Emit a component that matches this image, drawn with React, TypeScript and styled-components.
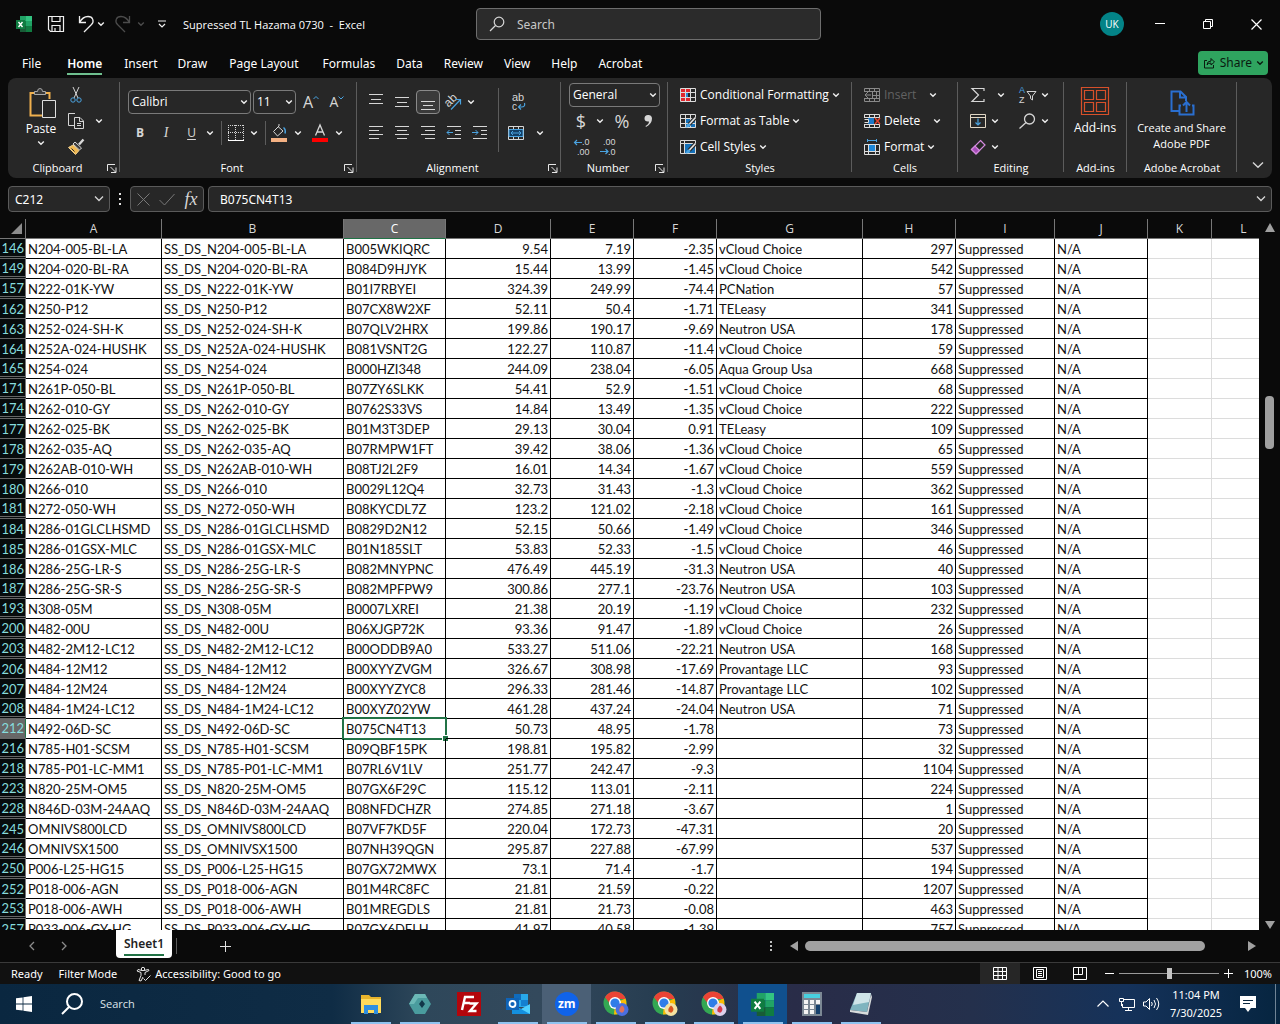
import React from "react";
import styled, { createGlobalStyle, css } from "styled-components";

const ui = `"Open Sans", "Noto Sans", sans-serif`;
const uiWide = `"Noto Sans", "Open Sans", sans-serif`;
const sheet = `Lato, "Open Sans", sans-serif`;
const mini = `"Liberation Sans", sans-serif`;
const blue = "#4aa3e0";
const fg = "#d6d6d6";

const Global = createGlobalStyle`
  *, *::before, *::after { box-sizing: border-box; }
  body { margin: 0; background: #0a0a0a; font: 12px/16px ${ui}; color: #fff; }
  button, input, select { font: inherit; color: inherit; margin: 0; padding: 0; border: 0; background: none; outline: 0; }
  svg { display: block; flex: none; overflow: visible; }
`;

const Window = styled.div`
  display: flex;
  flex-direction: column;
  height: 100vh;
  overflow: hidden;
`;

const row = css`
  display: flex;
  align-items: center;
`;

/* ---------- title bar ---------- */
const TitleBar = styled.header`
  display: grid;
  grid-template-columns: 476px minmax(0, 345px) 1fr;
  height: 48px;
  align-items: center;
`;
const QuickAccess = styled.div`
  ${row}
  padding-left: 16px;
`;
const Title = styled.h1`
  margin: 0 0 0 5px;
  padding-top: 1px;
  font-size: 11px;
  font-weight: 400;
  white-space: pre;
`;
const SearchBox = styled.label`
  ${row}
  height: 32px;
  padding: 0 12px;
  gap: 12px;
  border: 1px solid #6e6e6e;
  border-radius: 4px;
  background: #2b2b2b;
  font-family: ${uiWide};
  input {
    flex: 1;
    min-width: 0;
    padding-top: 1px;
  }
  input::placeholder {
    color: #c8c8c8;
    opacity: 1;
  }
`;
const WindowControls = styled.div`
  ${row}
  justify-content: flex-end;
`;
const Avatar = styled.button`
  width: 24px;
  height: 24px;
  margin-right: 12px;
  border-radius: 50%;
  background: #038387;
  font-size: 10px;
`;
const IconButton = styled.button<{ $w?: number; $h?: number; $boxed?: boolean }>`
  display: flex;
  flex: none;
  align-items: center;
  justify-content: center;
  width: ${(p) => p.$w ?? 24}px;
  height: ${(p) => p.$h ?? 24}px;
  ${(p) => p.$boxed && "margin: 0 1px; border: 1px solid #8a8a8a; border-radius: 4px; background: #3a3a3a;"}
`;

/* ---------- ribbon tabs ---------- */
const TabBar = styled.nav`
  ${row}
  height: 30px;
  padding: 0 12px 0 12px;
`;
const Tab = styled.button<{ $active?: boolean; $gap?: number }>`
  height: 26px;
  padding: 0 10px;
  margin-right: ${(p) => p.$gap ?? 0}px;
  font-family: ${uiWide};
  font-weight: ${(p) => (p.$active ? 600 : 400)};
  span {
    display: block;
    padding: 4px 0 1px;
    border-bottom: 2px solid ${(p) => (p.$active ? "#6fc08f" : "transparent")};
  }
`;
const Share = styled.button`
  ${row}
  margin-left: auto;
  height: 24px;
  padding: 0 5px;
  gap: 5px;
  border-radius: 4px;
  background: #2fa45f;
  color: #0a1a10;
  font-family: ${uiWide};
`;

/* ---------- ribbon ---------- */
const Ribbon = styled.section`
  display: flex;
  height: 100px;
  margin: 0 8px;
  padding-top: 4px;
  border-radius: 8px;
  background: #272727;
`;
const Group = styled.div<{ $w: number }>`
  display: flex;
  flex: none;
  flex-direction: column;
  width: ${(p) => p.$w}px;
  height: 94px;
  background: linear-gradient(#5c5c5c, #5c5c5c) right top / 1px 90px no-repeat;
`;
const GroupBody = styled.div<{ $pad?: number }>`
  display: flex;
  height: 78px;
  padding-left: ${(p) => p.$pad ?? 0}px;
`;
const GroupLabel = styled.div`
  display: flex;
  height: 16px;
  font-size: 11px;
  span {
    flex: 1;
    text-align: center;
    white-space: nowrap;
  }
  svg {
    margin-right: 3px;
  }
`;
const Stack = styled.div<{ $pad?: number }>`
  display: flex;
  flex-direction: column;
  padding-top: ${(p) => p.$pad ?? 0}px;
`;
const Line = styled.div<{ $h?: number }>`
  ${row}
  height: ${(p) => p.$h ?? 26}px;
`;
const BigButton = styled.button<{ $w: number; $small?: boolean }>`
  display: flex;
  flex-direction: column;
  align-items: center;
  width: ${(p) => p.$w}px;
  padding-top: 4px;
  font-size: ${(p) => (p.$small ? 11 : 12)}px;
  svg + span {
    margin-top: 2px;
  }
`;
const TextButton = styled.button<{ $dim?: boolean; $w?: number }>`
  ${row}
  gap: 4px;
  height: 24px;
  ${(p) => p.$w && `width: ${p.$w}px;`}
  color: ${(p) => (p.$dim ? "#626262" : "#fff")};
  white-space: nowrap;
`;
const Divider = styled.i<{ $w: number; $h: number }>`
  flex: none;
  width: ${(p) => p.$w}px;
  height: ${(p) => p.$h}px;
  background: linear-gradient(#5c5c5c, #5c5c5c) center / 1px 100% no-repeat;
`;
const SelectWrap = styled.span<{ $w: number }>`
  display: grid;
  align-items: center;
  width: ${(p) => p.$w}px;
  margin-right: 2px;
  select {
    grid-area: 1 / 1;
    height: 24px;
    padding-left: 3px;
    appearance: none;
    border: 1px solid #7a7a7a;
    border-radius: 4px;
    background: #272727;
  }
  svg {
    grid-area: 1 / 1;
    justify-self: end;
    margin-right: 4px;
    pointer-events: none;
  }
`;
const Glyph = styled.span<{ $size: number; $serif?: boolean; $italic?: boolean; $bold?: boolean; $under?: boolean }>`
  font-size: ${(p) => p.$size}px;
  line-height: 20px;
  color: ${fg};
  font-family: ${(p) => (p.$serif ? `"Liberation Serif", serif` : ui)};
  font-style: ${(p) => (p.$italic ? "italic" : "normal")};
  font-weight: ${(p) => (p.$bold ? 700 : 400)};
  text-decoration: ${(p) => (p.$under ? "underline" : "none")};
  text-underline-offset: 2px;
`;
const Collapse = styled.button`
  display: flex;
  margin: auto 8px 9px auto;
`;

/* ---------- formula bar ---------- */
const FormulaBar = styled.section`
  ${row}
  padding: 8px 8px 7px;
  font-family: ${uiWide};
`;
const Field = styled.div<{ $w?: number; $pad?: number }>`
  ${row}
  ${(p) => (p.$w ? `flex: none; width: ${p.$w}px;` : "flex: 1; min-width: 0; margin-left: 4px;")}
  height: 26px;
  padding: 0 2px 0 ${(p) => p.$pad ?? 0}px;
  border: 1px solid #5a5a5a;
  border-radius: 4px;
  background: #272727;
  input {
    flex: 1;
    min-width: 0;
    padding-top: 1px;
  }
`;

/* ---------- grid ---------- */
const SheetArea = styled.main`
  display: flex;
  flex: 1;
  min-height: 0;
`;
const GridView = styled.div`
  flex: 1;
  min-width: 0;
  overflow: hidden;
  background: #fff;
`;
const Grid = styled.table`
  width: max(100%, 1276px);
  table-layout: fixed;
  border-collapse: separate;
  border-spacing: 0;
  font: 13px/17px ${sheet};
  color: #111;
`;
const ColHead = styled.th<{ $active?: boolean }>`
  height: 20px;
  padding: 0;
  font: 12px/19px ${ui};
  color: ${(p) => (p.$active ? "#fff" : "#d8d8d8")};
  background: ${(p) => (p.$active ? "#686868" : "#0a0a0a")};
  border-right: 1px solid #777;
  border-bottom: 1px solid ${(p) => (p.$active ? "#217346" : "#777")};
`;
const Corner = styled(ColHead)`
  svg {
    margin-left: auto;
    margin-right: 3px;
  }
`;
const RowHead = styled.th<{ $active?: boolean; $skip?: boolean }>`
  height: 20px;
  padding: ${(p) => (p.$skip ? 1 : 2)}px 1px 0 0;
  text-align: right;
  font-weight: 400;
  line-height: ${(p) => (p.$skip ? 16 : 17)}px;
  color: #86dcdc;
  background: ${(p) => (p.$active ? "#686868" : "#070b0c")};
  border-right: 1px solid ${(p) => (p.$active ? "#217346" : "#777")};
  border-bottom: ${(p) => (p.$skip ? "3px double #666" : "1px solid #666")};
`;
const Cell = styled.td<{ $num?: boolean; $blank?: boolean; $active?: boolean }>`
  position: relative;
  height: 20px;
  padding: 2px 2px 0;
  white-space: nowrap;
  text-align: ${(p) => (p.$num ? "right" : "left")};
  border-right: 1px solid ${(p) => (p.$blank ? "#dcdcdc" : "#000")};
  border-bottom: 1px solid ${(p) => (p.$blank ? "#dcdcdc" : "#000")};
  ${(p) =>
    p.$active &&
    css`
      &::before {
        content: "";
        position: absolute;
        inset: -2px;
        border: 2px solid #217346;
      }
      &::after {
        content: "";
        position: absolute;
        right: -3px;
        bottom: -3px;
        width: 6px;
        height: 6px;
        border: 1px solid #fff;
        border-right: 0;
        border-bottom: 0;
        background: #217346;
      }
    `}
`;
const VScroll = styled.div`
  display: flex;
  flex-direction: column;
  align-items: center;
  width: 21px;
  padding: 4px 0 0;
`;
const VTrack = styled.div`
  display: grid;
  flex: 1;
  width: 9px;
  grid-template-rows: 164fr 53fr 471fr;
  &::before {
    content: "";
    grid-row: 2;
    border-radius: 4px;
    background: #a0a0a0;
  }
`;

/* ---------- sheet tabs ---------- */
const SheetBar = styled.nav`
  display: grid;
  grid-template-columns: 1fr 521px;
  height: 32px;
  align-items: center;
`;
const SheetTabs = styled.div`
  ${row}
  height: 32px;
  padding-left: 16px;
`;
const SheetTab = styled.button`
  align-self: flex-start;
  height: 28px;
  margin: 0 0 0 36px;
  padding: 0 8px;
  border-radius: 0 0 4px 4px;
  background: #fff;
  color: #222;
  font-family: ${uiWide};
  font-weight: 600;
  span {
    display: block;
    padding-top: 2px;
    border-bottom: 2px solid #217346;
    line-height: 20px;
  }
`;
const HScroll = styled.div`
  ${row}
  padding-right: 24px;
  gap: 6px;
`;
const HTrack = styled.div`
  display: grid;
  flex: 1;
  height: 10px;
  grid-template-columns: 400fr 35fr;
  &::before {
    content: "";
    border-radius: 5px;
    background: #a0a0a0;
  }
`;

/* ---------- status bar ---------- */
const StatusBar = styled.footer`
  ${row}
  height: 22px;
  padding: 0 8px 0 11px;
  border-top: 1px solid #3a3a3a;
  background: #111;
  font: 11px/16px ${uiWide};
`;
const StatusText = styled.span<{ $gap?: number }>`
  margin-right: ${(p) => p.$gap ?? 0}px;
`;
const ViewSwitch = styled.div`
  display: flex;
  margin-left: auto;
`;
const ViewButton = styled.button<{ $active?: boolean }>`
  display: flex;
  align-items: center;
  justify-content: center;
  width: 40px;
  height: 21px;
  background: ${(p) => (p.$active ? "#262626" : "transparent")};
`;
const Zoom = styled.input`
  width: 100px;
  height: 16px;
  appearance: none;
  background: linear-gradient(#9a9a9a, #9a9a9a) center / 100% 1px no-repeat;
  &::-webkit-slider-thumb {
    appearance: none;
    width: 5px;
    height: 11px;
    background: #c4c4c4;
  }
`;
const ZoomValue = styled.output`
  width: 35px;
  text-align: right;
`;

/* ---------- task bar ---------- */
const TaskBar = styled.footer`
  ${row}
  height: 40px;
  background: linear-gradient(90deg, #0a2740 0, #0f2c45 26%, #2e475a 33%, #33495c 42%, #263c50 52%, #292c48 62%, #24304c 76%, #15325a 88%, #062540 100%);
`;
const TaskSearch = styled.button`
  ${row}
  width: 298px;
  height: 40px;
  gap: 16px;
  padding-left: 12px;
  font-size: 11px;
  color: #dde4ea;
`;
const TaskItem = styled.button<{ $bg?: string; $idle?: boolean }>`
  display: flex;
  align-items: center;
  justify-content: center;
  width: 49px;
  height: 40px;
  background: ${(p) => (p.$idle ? "none" : "linear-gradient(#8fc3f0, #8fc3f0) center bottom / 40px 2px no-repeat")}
    ${(p) => (p.$bg ? `, linear-gradient(${p.$bg}, ${p.$bg})` : "")};
`;
const Tray = styled.div`
  ${row}
  margin-left: auto;
  padding-right: 4px;
`;
const Clock = styled.time`
  width: 66px;
  text-align: center;
  font: 11px/18px ${uiWide};
`;
const ShowDesktop = styled.i`
  width: 1px;
  height: 40px;
  margin-left: 8px;
  background: #6f8496;
`;

/* ---------- icons ---------- */
type SvgProps = { w?: number; h?: number; s?: string; sw?: number; children: React.ReactNode };
const Svg = ({ w = 16, h = 16, s = fg, sw = 1, children }: SvgProps) => (
  <svg width={w} height={h} viewBox={`0 0 ${w} ${h}`} fill="none" stroke={s} strokeWidth={sw} aria-hidden="true">
    {children}
  </svg>
);
const Chev = ({ c = "#f0f0f0" }: { c?: string }) => (
  <Svg w={6} h={6} s={c} sw={1.4}>
    <path d="M.200 1.500 3 4.200 5.800 1.500" />
  </Svg>
);
const BigChev = () => (
  <Svg w={12} h={8} sw={1.4}>
    <path d="M1 1.500 6 6.300l5-4.800" />
  </Svg>
);
const Launcher = () => (
  <Svg w={10} h={16} s="#e6e6e6">
    <path d="M.500 11V4.500H8M3.500 7l5 5M9 7.500v5H4" />
  </Svg>
);
const ExcelLogo = ({ size = 16 }: { size?: number }) => (
  <svg width={size} height={size} viewBox="0 0 16 16" aria-hidden="true">
    <path d="M4 0h6v5H4z" fill="#21a366" />
    <path d="M10 0h6v5h-6z" fill="#33c481" />
    <path d="M4 5h6v5H4z" fill="#107c41" />
    <path d="M10 5h6v5h-6z" fill="#21a366" />
    <path d="M4 10h12v6H4z" fill="#185c37" />
    <path d="M10 10h6v6h-6z" fill="#107c41" />
    <path d="M0 4h9v9H0z" fill="#107c41" />
    <path d="m2.500 6 4 5M6.500 6l-4 5" stroke="#fff" strokeWidth="1.400" />
  </svg>
);
const Chrome = ({ badge, inner }: { badge: string; inner: string }) => (
  <svg width="26" height="26" viewBox="0 0 26 26" aria-hidden="true">
    <circle cx="12" cy="12" r="11.500" fill="#34a853" />
    <path d="M12 12 22.500 7.500A11.500 11.500 0 0 1 11 23.500Z" fill="#fbbc04" />
    <path d="M2 6.300A11.500 11.500 0 0 1 22.800 8H12L8 14Z" fill="#ea4335" />
    <circle cx="12" cy="12" r="6" fill="#fff" />
    <circle cx="12" cy="12" r="4.600" fill="#2f7de8" />
    <circle cx="19" cy="18.500" r="6.500" fill={badge} />
    <path d="M19 14.500q3.500 2.500 2 5.500t-4.500.5q-1-3 2.500-6" fill={inner} />
  </svg>
);
const Bars = ({ l }: { l: number[][] }) => (
  <Svg w={16} h={18}>
    {l.map(([x1, x2, y]) => (
      <path key={y} d={`M${x1} ${y}.500H${x2}`} />
    ))}
  </Svg>
);
const TableIcon = ({ kind }: { kind: "cf" | "table" | "cell" | "insert" | "delete" | "format" }) => {
  const c = kind === "insert" ? "#8a8a8a" : "#dcdcdc";
  return (
    <Svg s={c}>
      {kind === "cf" && <path d="M1 1h9v4H1zM1 5h4v5H1zM1 10h9v5H1z" fill="#e0282e" stroke="none" />}
      {kind === "cf" && <path d="M6 5h2v5H6z" fill="#2b88d8" stroke="none" />}
      {kind === "table" && <path d="M5 5h10v10H5z" fill="#1470b8" stroke="none" />}
      {kind === "cell" && <path d="M4 4h11v11H4z" fill="#1470b8" stroke="none" />}
      {kind === "format" && <path d="M4 6h8v6H4z" fill="#1c86d8" stroke="none" />}
      {kind === "delete" && <path d="M4 4h6v7H4z" fill="#1c78c8" stroke="none" />}
      {(kind === "cf" || kind === "table") && <path d="M.500 1.500h15v13H.500zM.500 5.500h15M.500 10.500h15M5.500 1v14M10.500 1v14" />}
      {kind === "cell" && <path d="M.500 1.500h15v13H.500zM4.500 1v14M.500 4.500h15" />}
      {(kind === "insert" || kind === "delete") && (
        <path d="M.500 5V1.500h15V5M.500 11v3.500h15V11M5.500 1.500v3M10.500 1.500v3M5.500 11v3.500M10.500 11v3.500M.500 4.500h15M.500 11.500h15" />
      )}
      {kind === "insert" && <path d="M8.500 4.500v7M12.500 4.500v7M8 8.500h8M15.500 4v8M7 8H1m3-3L1 8l3 3" />}
      {kind === "delete" && <path d="M.500 6.500h4v3h-4" />}
      {kind === "delete" && <path d="m11 5 5 6M16 5l-5 6" stroke="#e8432e" strokeWidth="1.400" />}
      {kind === "format" && <path d="M.500 5.500h15v10H.500zM.500 12.500h15M4.500 5v10M11.500 5v10" />}
      {kind === "format" && <path d="M4 1.500h8M3.500 0v3M12.500 0v3" stroke={blue} />}
      {(kind === "table" || kind === "cell") && (
        <>
          <path d="M15.500 4.500 9 11.500" stroke="#272727" strokeWidth="4" />
          <path d="M15.500 4.500 8.500 12" stroke="#e6e6e6" strokeWidth="1.600" />
          <path d="M9.500 10.500q-3 0-4 4 3.500.5 5-2.500Z" fill={blue} stroke="none" />
        </>
      )}
    </Svg>
  );
};

/* ---------- data ---------- */
const V = "vCloud Choice";
const N = "Neutron USA";
type Item = [number, string, string, string, string, string, string, string];
const items: Item[] = [
  [146, "N204-005-BL-LA", "B005WKIQRC", "9.54", "7.19", "-2.35", V, "297"],
  [149, "N204-020-BL-RA", "B084D9HJYK", "15.44", "13.99", "-1.45", V, "542"],
  [157, "N222-01K-YW", "B01I7RBYEI", "324.39", "249.99", "-74.4", "PCNation", "57"],
  [162, "N250-P12", "B07CX8W2XF", "52.11", "50.4", "-1.71", "TELeasy", "341"],
  [163, "N252-024-SH-K", "B07QLV2HRX", "199.86", "190.17", "-9.69", N, "178"],
  [164, "N252A-024-HUSHK", "B081VSNT2G", "122.27", "110.87", "-11.4", V, "59"],
  [165, "N254-024", "B000HZI348", "244.09", "238.04", "-6.05", "Aqua Group Usa", "668"],
  [171, "N261P-050-BL", "B07ZY6SLKK", "54.41", "52.9", "-1.51", V, "68"],
  [174, "N262-010-GY", "B0762S33VS", "14.84", "13.49", "-1.35", V, "222"],
  [177, "N262-025-BK", "B01M3T3DEP", "29.13", "30.04", "0.91", "TELeasy", "109"],
  [178, "N262-035-AQ", "B07RMPW1FT", "39.42", "38.06", "-1.36", V, "65"],
  [179, "N262AB-010-WH", "B08TJ2L2F9", "16.01", "14.34", "-1.67", V, "559"],
  [180, "N266-010", "B0029L12Q4", "32.73", "31.43", "-1.3", V, "362"],
  [181, "N272-050-WH", "B08KYCDL7Z", "123.2", "121.02", "-2.18", V, "161"],
  [184, "N286-01GLCLHSMD", "B0829D2N12", "52.15", "50.66", "-1.49", V, "346"],
  [185, "N286-01GSX-MLC", "B01N185SLT", "53.83", "52.33", "-1.5", V, "46"],
  [186, "N286-25G-LR-S", "B082MNYPNC", "476.49", "445.19", "-31.3", N, "40"],
  [187, "N286-25G-SR-S", "B082MPFPW9", "300.86", "277.1", "-23.76", N, "103"],
  [193, "N308-05M", "B0007LXREI", "21.38", "20.19", "-1.19", V, "232"],
  [200, "N482-00U", "B06XJGP72K", "93.36", "91.47", "-1.89", V, "26"],
  [203, "N482-2M12-LC12", "B00ODDB9A0", "533.27", "511.06", "-22.21", N, "168"],
  [206, "N484-12M12", "B00XYYZVGM", "326.67", "308.98", "-17.69", "Provantage LLC", "93"],
  [207, "N484-12M24", "B00XYYZYC8", "296.33", "281.46", "-14.87", "Provantage LLC", "102"],
  [208, "N484-1M24-LC12", "B00XYZ02YW", "461.28", "437.24", "-24.04", N, "71"],
  [212, "N492-06D-SC", "B075CN4T13", "50.73", "48.95", "-1.78", "", "73"],
  [216, "N785-H01-SCSM", "B09QBF15PK", "198.81", "195.82", "-2.99", "", "32"],
  [218, "N785-P01-LC-MM1", "B07RL6V1LV", "251.77", "242.47", "-9.3", "", "1104"],
  [223, "N820-25M-OM5", "B07GX6F29C", "115.12", "113.01", "-2.11", "", "224"],
  [228, "N846D-03M-24AAQ", "B08NFDCHZR", "274.85", "271.18", "-3.67", "", "1"],
  [245, "OMNIVS800LCD", "B07VF7KD5F", "220.04", "172.73", "-47.31", "", "20"],
  [246, "OMNIVSX1500", "B07NH39QGN", "295.87", "227.88", "-67.99", "", "537"],
  [250, "P006-L25-HG15", "B07GX72MWX", "73.1", "71.4", "-1.7", "", "194"],
  [252, "P018-006-AGN", "B01M4RC8FC", "21.81", "21.59", "-0.22", "", "1207"],
  [253, "P018-006-AWH", "B01MREGDLS", "21.81", "21.73", "-0.08", "", "463"],
  [257, "P033-006-GY-HG", "B07GX6DFLH", "41.97", "40.58", "-1.39", "", "757"],
];
const colWidths = [26, 136, 182, 102, 105, 83, 83, 146, 93, 99, 93, 64];
const letters = "ABCDEFGHIJKL".split("");
const tabs: [string, number][] = [
  ["File", 6], ["Home", 2], ["Insert", 0], ["Draw", 2], ["Page Layout", 4], ["Formulas", 1],
  ["Data", 1], ["Review", 1], ["View", 1], ["Help", 1], ["Acrobat", 0],
];

const ChevButton = ({ w = 14, label }: { w?: number; label: string }) => (
  <IconButton $w={w} aria-label={label}>
    <Chev />
  </IconButton>
);
const Pick = ({ w, value, label }: { w: number; value: string; label: string }) => (
  <SelectWrap $w={w}>
    <select aria-label={label} defaultValue={value}>
      <option>{value}</option>
    </select>
    <Chev />
  </SelectWrap>
);

function TopBar() {
  return (
    <TitleBar>
      <QuickAccess>
        <ExcelLogo />
        <IconButton $w={48} aria-label="Save">
          <Svg w={18} h={18} s="#f0f0f0" sw={1.2}>
            <path d="M1.500 1.500h15v15h-13l-2-2zM5 1.500v5h8v-5M5 16.500v-6h8v6M8 16v-3" />
          </Svg>
        </IconButton>
        <IconButton $w={12} aria-label="Undo">
          <Svg w={16} h={18} s="#f0f0f0" sw={1.3}>
            <path d="M1.500 1v6.500H8M1.500 7.500C4 3 7 1.500 10 1.500c5 0 6.500 5 3.500 8L6 17" />
          </Svg>
        </IconButton>
        <ChevButton w={18} label="Undo list" />
        <IconButton $w={26} aria-label="Redo">
          <Svg w={16} h={18} s="#4c4c4c" sw={1.3}>
            <path d="M14.500 1v6.500H8M14.500 7.500C12 3 9 1.500 6 1.500c-5 0-6.500 5-3.500 8L10 17" />
          </Svg>
        </IconButton>
        <IconButton $w={10} aria-label="Redo list">
          <Chev c="#4c4c4c" />
        </IconButton>
        <IconButton $w={32} aria-label="Customize toolbar">
          <Svg w={10} h={8} s="#f0f0f0" sw={1.2}>
            <path d="M1 1h8M2 4l3 3 3-3" />
          </Svg>
        </IconButton>
        <Title>{"Supressed TL Hazama 0730  -  Excel"}</Title>
      </QuickAccess>
      <SearchBox>
        <Svg w={16} h={16} sw={1.2}>
          <circle cx="10" cy="6" r="4.800" />
          <path d="M6.500 9.500 1 15" />
        </Svg>
        <input placeholder="Search" aria-label="Search" />
      </SearchBox>
      <WindowControls>
        <Avatar>UK</Avatar>
        <IconButton $w={48} aria-label="Minimize">
          <Svg w={10} h={10} s="#fff"><path d="M0 4.500h10" /></Svg>
        </IconButton>
        <IconButton $w={48} aria-label="Restore">
          <Svg w={10} h={10} s="#fff"><path d="M.500 2.500h7v7h-7zM2.500 2.500V.500h7v7h-2" /></Svg>
        </IconButton>
        <IconButton $w={48} aria-label="Close">
          <Svg w={11} h={11} s="#fff" sw={1.2}><path d="m.500.500 10 10M10.500.500l-10 10" /></Svg>
        </IconButton>
      </WindowControls>
    </TitleBar>
  );
}

function RibbonPanel() {
  return (
    <Ribbon>
      <Group $w={112}>
        <GroupBody $pad={10}>
          <BigButton $w={46}>
            <Svg w={26} h={33}>
              <path d="M7 7H2.500v22.500H14M17 7h4.500v6" stroke="#f0b04e" strokeWidth="2" />
              <path d="M6.500 5.500h3q0-3 2.500-3t2.500 3h3v3h-11z" stroke="#a8a8a8" fill="#3a3a3a" />
              <path d="M14.500 14.500h13v17h-13z" fill="#272727" stroke="#e0e0e0" />
            </Svg>
            <span>Paste</span>
            <Svg w={6} h={10} s="#f0f0f0" sw={1.4}><path d="M.200 4.500 3 7.200 5.800 4.500" /></Svg>
          </BigButton>
          <Stack>
            <Line>
              <IconButton aria-label="Cut">
                <Svg>
                  <path d="M5 0l5 11M11 0 6 11" />
                  <circle cx="5" cy="13" r="2.200" stroke={blue} />
                  <circle cx="11" cy="13" r="2.200" stroke={blue} />
                </Svg>
              </IconButton>
            </Line>
            <Line>
              <IconButton aria-label="Copy">
                <Svg><path d="M6 12.500H.500v-12H7M6.500 4.500H12l3.500 3.500v7.500h-9zM11.500 5v3.500H15M9 10.500h4M9 12.500h4" /></Svg>
              </IconButton>
              <ChevButton w={22} label="Copy options" />
            </Line>
            <Line>
              <IconButton aria-label="Format painter">
                <Svg>
                  <path d="m15.500.500-4.500 5" stroke="#d8d8d8" strokeWidth="2.400" />
                  <path d="m7 3 6.500 6-2 2L5 5z" fill="#3a3a3a" stroke="#d8d8d8" />
                  <path d="M5 6 .500 8.500 7.500 15.500 11 11.500z" fill="#f0b850" stroke="#f0d090" />
                  <path d="m3.500 9.500 3 3" stroke="#272727" />
                </Svg>
              </IconButton>
            </Line>
          </Stack>
        </GroupBody>
        <GroupLabel><span>Clipboard</span><Launcher /></GroupLabel>
      </Group>

      <Group $w={237}>
        <GroupBody $pad={8}>
          <Stack $pad={4}>
            <Line $h={32}>
              <Pick w={123} value="Calibri" label="Font" />
              <Pick w={43} value="11" label="Font size" />
              <IconButton $w={26} aria-label="Increase font size">
                <Glyph $size={16}>A</Glyph>
                <Svg w={6} h={14} s={blue}><path d="m.500 4 2.500-2.500L5.500 4" /></Svg>
              </IconButton>
              <IconButton $w={26} aria-label="Decrease font size">
                <Glyph $size={14}>A</Glyph>
                <Svg w={6} h={14} s={blue}><path d="M.500 1.500 3 4l2.500-2.500" /></Svg>
              </IconButton>
            </Line>
            <Line $h={30}>
              <IconButton $w={24} aria-label="Bold"><Glyph $size={12} $bold>B</Glyph></IconButton>
              <IconButton $w={28} aria-label="Italic"><Glyph $size={14} $serif $italic>I</Glyph></IconButton>
              <IconButton $w={23} aria-label="Underline"><Glyph $size={12} $under>U</Glyph></IconButton>
              <ChevButton label="Underline styles" />
              <Divider $w={9} $h={24} />
              <IconButton $w={20} aria-label="Borders">
                <Svg>
                  <path d="M0 .500h16M0 7.500h16M.500 0v15M7.500 0v15M15.500 0v15" strokeDasharray="1 1" />
                  <path d="M0 15.500h16" stroke="#fff" />
                </Svg>
              </IconButton>
              <ChevButton w={16} label="Border styles" />
              <Divider $w={7} $h={24} />
              <IconButton $w={20} aria-label="Fill color">
                <Svg h={16}>
                  <path d="M7 1.500 12 6l-5.500 5L2.500 6.500 8 1v-2" />
                  <path d="M12.500 2.500q2.500 2 1.500 6" stroke={blue} strokeWidth="1.500" />
                  <path d="M0 13h16v4H0z" fill="#f4b183" stroke="none" />
                </Svg>
              </IconButton>
              <ChevButton w={18} label="Fill colors" />
              <IconButton $w={26} aria-label="Font color">
                <Svg h={16}>
                  <path d="M3.500 10.500 8 0l4.500 10.500M5 7h6" strokeWidth="1.300" />
                  <path d="M0 13h16v4H0z" fill="#f00" stroke="none" />
                </Svg>
              </IconButton>
              <ChevButton w={12} label="Font colors" />
            </Line>
          </Stack>
        </GroupBody>
        <GroupLabel><span>Font</span><Launcher /></GroupLabel>
      </Group>

      <Group $w={204}>
        <GroupBody $pad={6}>
          <Stack $pad={4}>
            <Line $h={32}>
              <IconButton $w={26} aria-label="Top align"><Bars l={[[1, 15, 1], [3, 13, 6], [1, 15, 10]]} /></IconButton>
              <IconButton $w={26} aria-label="Middle align"><Bars l={[[1, 15, 4], [3, 13, 9], [1, 15, 13]]} /></IconButton>
              <IconButton $w={24} $boxed aria-label="Bottom align"><Bars l={[[1, 15, 8], [3, 13, 12], [1, 15, 16]]} /></IconButton>
              <IconButton $w={24} aria-label="Orientation">
                <Svg>
                  <text x="0" y="11" transform="rotate(-45 5 8)" fontSize="12" fontFamily={mini} fill={fg} stroke="none">ab</text>
                  <path d="M6 15.500 15 6M10.500 5.500h5v5" stroke={blue} strokeWidth="1.200" />
                </Svg>
              </IconButton>
              <ChevButton w={12} label="Orientation options" />
            </Line>
            <Line $h={30}>
              <IconButton $w={26} aria-label="Align left"><Bars l={[[1, 15, 2], [1, 11, 6], [1, 15, 10], [1, 11, 14]]} /></IconButton>
              <IconButton $w={26} aria-label="Center"><Bars l={[[1, 15, 2], [3, 13, 6], [1, 15, 10], [3, 13, 14]]} /></IconButton>
              <IconButton $w={26} aria-label="Align right"><Bars l={[[1, 15, 2], [5, 15, 6], [1, 15, 10], [5, 15, 14]]} /></IconButton>
              <IconButton $w={26} aria-label="Decrease indent">
                <Svg h={18}>
                  <path d="M1 2.500h14M9 6.500h6M9 10.500h6M1 14.500h14" />
                  <path d="M7 8.500H1M3.500 6 1 8.500 3.500 11" stroke={blue} />
                </Svg>
              </IconButton>
              <IconButton $w={26} aria-label="Increase indent">
                <Svg h={18}>
                  <path d="M1 2.500h14M9 6.500h6M9 10.500h6M1 14.500h14" />
                  <path d="M0 8.500h6M3.500 6 6 8.500 3.500 11" stroke={blue} />
                </Svg>
              </IconButton>
            </Line>
          </Stack>
          <Stack $pad={6}><Divider $w={11} $h={64} /></Stack>
          <Stack $pad={4}>
            <Line $h={32}>
              <IconButton $w={28} aria-label="Wrap text">
                <Svg w={14} h={18}>
                  <text x="1" y="8" fontSize="11" fontFamily={mini} fill={fg} stroke="none">ab</text>
                  <text x="1" y="17" fontSize="10" fontFamily={mini} fill={fg} stroke="none">c</text>
                  <path d="M13.500 10q1 4-3 4H7.500M10 11.500 7.500 14l2.500 2.500" stroke={blue} strokeWidth="1.200" />
                </Svg>
              </IconButton>
            </Line>
            <Line $h={30}>
              <IconButton $w={24} aria-label="Merge and center">
                <Svg>
                  <path d="M.500 1.500h15v13H.500zM5.500 1.500v3M10.500 1.500v3M5.500 11.500v3M10.500 11.500v3" />
                  <path d="M1 4.500h14v7H1z" fill="#123f66" stroke={blue} />
                  <path d="M3 8h10M5 6 3 8l2 2M11 6l2 2-2 2" stroke={blue} />
                </Svg>
              </IconButton>
              <ChevButton w={24} label="Merge options" />
            </Line>
          </Stack>
        </GroupBody>
        <GroupLabel><span>Alignment</span><Launcher /></GroupLabel>
      </Group>

      <Group $w={107}>
        <GroupBody $pad={8}>
          <Stack>
            <Line><Pick w={91} value="General" label="Number format" /></Line>
            <Line>
              <IconButton aria-label="Currency"><Glyph $size={18}>$</Glyph></IconButton>
              <ChevButton label="Currency options" />
              <IconButton $w={30} aria-label="Percent"><Glyph $size={18}>%</Glyph></IconButton>
              <IconButton $w={22} aria-label="Comma style">
                <Svg w={10} h={14} s="none">
                  <path d="M5 1a3.500 3.500 0 0 1 4 3.500Q9 10 3 13l-.5-1Q6 10 6 7.500 1.500 8 1.500 4.500A3.500 3.500 0 0 1 5 1Z" fill={fg} />
                </Svg>
              </IconButton>
            </Line>
            <Line>
              {[true, false].map((inc) => (
                <IconButton key={String(inc)} $w={26} aria-label={inc ? "Increase decimal" : "Decrease decimal"}>
                  <Svg w={18} h={18}>
                    <text x={inc ? 9 : 4} y="7" fontSize="9" fontFamily={mini} fill={fg} stroke="none">{inc ? ".0" : ".00"}</text>
                    <text x={inc ? 4 : 9} y="17" fontSize="9" fontFamily={mini} fill={fg} stroke="none">{inc ? ".00" : ".0"}</text>
                    <path d={inc ? "M9 4.500H1.500M4 2 1.500 4.500 4 7" : "M1 13.500h8M6.500 11 9 13.500 6.500 16"} stroke={blue} strokeWidth="1.200" />
                  </Svg>
                </IconButton>
              ))}
            </Line>
          </Stack>
        </GroupBody>
        <GroupLabel><span>Number</span><Launcher /></GroupLabel>
      </Group>

      <Group $w={184}>
        <GroupBody $pad={12}>
          <Stack>
            <Line><TextButton><TableIcon kind="cf" />Conditional Formatting<Chev /></TextButton></Line>
            <Line><TextButton><TableIcon kind="table" />Format as Table<Chev /></TextButton></Line>
            <Line><TextButton><TableIcon kind="cell" />Cell Styles<Chev /></TextButton></Line>
          </Stack>
        </GroupBody>
        <GroupLabel><span>Styles</span></GroupLabel>
      </Group>

      <Group $w={106}>
        <GroupBody $pad={12}>
          <Stack>
            <Line><TextButton $dim $w={62}><TableIcon kind="insert" />Insert</TextButton><ChevButton label="Insert options" /></Line>
            <Line><TextButton $w={66}><TableIcon kind="delete" />Delete</TextButton><ChevButton label="Delete options" /></Line>
            <Line><TextButton><TableIcon kind="format" />Format<Chev /></TextButton></Line>
          </Stack>
        </GroupBody>
        <GroupLabel><span>Cells</span></GroupLabel>
      </Group>

      <Group $w={106}>
        <GroupBody $pad={8}>
          <Stack>
            <Line>
              <IconButton aria-label="AutoSum">
                <Svg sw={1.2}><path d="M14 4V1.500H2L8.500 8 2 14.500h12V12" /></Svg>
              </IconButton>
              <ChevButton w={22} label="AutoSum options" />
            </Line>
            <Line>
              <IconButton aria-label="Fill">
                <Svg s="#e0d6c4">
                  <path d="M.500 1.500h15v13H.500zM.500 4.500h15" />
                  <path d="M8 5.500V12M5.500 9.500 8 12l2.500-2.500" stroke={blue} strokeWidth="1.200" />
                </Svg>
              </IconButton>
              <ChevButton w={10} label="Fill options" />
            </Line>
            <Line>
              <IconButton aria-label="Clear">
                <Svg s="#d58be0" sw={1.2}>
                  <path d="M10.500 1.500 15 6l-9 9-4.500-4.500z" />
                  <path d="M1.500 10.500 5 7l4.500 4.500L6 15z" fill="#a64db8" />
                </Svg>
              </IconButton>
              <ChevButton w={10} label="Clear options" />
            </Line>
          </Stack>
          <Stack>
            <Line>
              <IconButton $w={28} aria-label="Sort and filter">
                <Svg w={14} h={18}>
                  <text x="0" y="7" fontSize="9" fontFamily={mini} fill={blue} stroke="none">A</text>
                  <text x="0" y="17" fontSize="9" fontFamily={mini} fill={fg} stroke="none">Z</text>
                  <path d="M8 5.500h9L13.500 10v4l-2-1.500V10z" />
                </Svg>
              </IconButton>
              <ChevButton w={10} label="Sort options" />
            </Line>
            <Line>
              <IconButton $w={28} aria-label="Find">
                <Svg sw={1.300}><circle cx="11.500" cy="6" r="5" /><path d="M8 9.500l-6.500 6" /></Svg>
              </IconButton>
              <ChevButton w={10} label="Find options" />
            </Line>
          </Stack>
        </GroupBody>
        <GroupLabel><span>Editing</span></GroupLabel>
      </Group>

      <Group $w={63}>
        <GroupBody>
          <BigButton $w={62}>
            <Svg w={30} h={32} s="#d8502a" sw={1.2}>
              <path d="M1.500 1.500h27v27h-27zM4.500 4.500h9v9h-9zM16.500 4.500h9v9h-9zM4.500 16.500h9v9h-9zM16.500 16.500h9v9h-9z" />
            </Svg>
            <span>Add-ins</span>
          </BigButton>
        </GroupBody>
        <GroupLabel><span>Add-ins</span></GroupLabel>
      </Group>

      <Group $w={110}>
        <GroupBody>
          <BigButton $w={109} $small>
            <Svg w={24} h={32} s="#2a6fd0" sw={2}>
              <path d="M9 25H1.500V5.500h9L16 11v4M10 6v5.500h6" />
              <path d="M11 19.500H9.500v9h14v-9H22M16.500 26v-9M13 19.500l3.500-3.500 3.500 3.500" />
            </Svg>
            <span>Create and Share<br />Adobe PDF</span>
          </BigButton>
        </GroupBody>
        <GroupLabel><span>Adobe Acrobat</span></GroupLabel>
      </Group>
      <Collapse aria-label="Collapse ribbon"><BigChev /></Collapse>
    </Ribbon>
  );
}

function Workbook() {
  return (
    <SheetArea>
      <GridView>
        <Grid>
          <colgroup>
            {colWidths.map((w, i) => <col key={i} style={{ width: w }} />)}
            <col />
          </colgroup>
          <thead>
            <tr>
              <Corner aria-label="Select all">
                <Svg w={11} h={11} s="none"><path d="M11 0v11H0z" fill="#8c8c8c" /></Svg>
              </Corner>
              {letters.map((l) => <ColHead key={l} $active={l === "C"}>{l}</ColHead>)}
            </tr>
          </thead>
          <tbody>
            {items.map(([n, sku, asin, d, e, f, g, h], i) => (
              <tr key={n}>
                <RowHead $active={n === 212} $skip={i + 1 < items.length && items[i + 1][0] !== n + 1}>{n}</RowHead>
                <Cell>{sku}</Cell>
                <Cell>SS_DS_{sku}</Cell>
                <Cell $active={n === 212}>{asin}</Cell>
                <Cell $num>{d}</Cell>
                <Cell $num>{e}</Cell>
                <Cell $num>{f}</Cell>
                <Cell>{g}</Cell>
                <Cell $num>{h}</Cell>
                <Cell>Suppressed</Cell>
                <Cell>N/A</Cell>
                <Cell $blank />
                <Cell $blank />
              </tr>
            ))}
          </tbody>
        </Grid>
      </GridView>
      <VScroll>
        <Svg w={10} h={9} s="none"><path d="M5 0l5 9H0z" fill="#a0a0a0" /></Svg>
        <VTrack />
        <Svg w={10} h={9} s="none"><path d="M5 8l5-8H0z" fill="#a0a0a0" /></Svg>
      </VScroll>
    </SheetArea>
  );
}

export default function App() {
  return (
    <Window>
      <Global />
      <TopBar />
      <TabBar>
        {tabs.map(([t, gap]) => (
          <Tab key={t} $active={t === "Home"} $gap={gap}><span>{t}</span></Tab>
        ))}
        <Share>
          <Svg w={12} h={12} s="#0a1a10"><path d="M4 3.500H1.500v7.500h9V8M4 8q0-4 4-4V1.500L11.500 5 8 8V6Q5 6 4 8Z" /></Svg>
          Share
          <Chev c="#0a1a10" />
        </Share>
      </TabBar>
      <RibbonPanel />
      <FormulaBar>
        <Field $w={102} $pad={6}>
          <input aria-label="Name box" defaultValue="C212" />
          <IconButton $w={16} aria-label="Names"><Svg w={10} h={8} sw={1.3}><path d="m1 1.500 4 4 4-4" /></Svg></IconButton>
        </Field>
        <IconButton $w={20} aria-label="Resize">
          <Svg w={2} h={12} s="none"><path d="M0 0h2v2H0zM0 5h2v2H0zM0 10h2v2H0z" fill="#e0e0e0" /></Svg>
        </IconButton>
        <Field $w={74}>
          <IconButton aria-label="Cancel"><Svg w={13} h={13} s="#787878"><path d="m.500.500 12 12M12.500.500l-12 12" /></Svg></IconButton>
          <IconButton aria-label="Enter"><Svg w={16} h={13} s="#787878"><path d="m.500 7 5 5 10-11" /></Svg></IconButton>
          <IconButton aria-label="Insert function"><Glyph $size={18} $serif $italic>fx</Glyph></IconButton>
        </Field>
        <Field $pad={11}>
          <input aria-label="Formula" defaultValue="B075CN4T13" />
          <IconButton $w={16} aria-label="Expand formula bar"><Svg w={10} h={8} sw={1.3}><path d="m1 1.500 4 4 4-4" /></Svg></IconButton>
        </Field>
      </FormulaBar>
      <Workbook />
      <SheetBar>
        <SheetTabs>
          <IconButton $w={32} aria-label="Previous sheet"><Svg w={8} h={10} s="#8c8c8c" sw={1.3}><path d="M6 1 2 5l4 4" /></Svg></IconButton>
          <IconButton $w={32} aria-label="Next sheet"><Svg w={8} h={10} s="#8c8c8c" sw={1.3}><path d="m2 1 4 4-4 4" /></Svg></IconButton>
          <SheetTab><span>Sheet1</span></SheetTab>
          <Divider $w={9} $h={16} />
          <IconButton $w={88} aria-label="New sheet"><Svg w={11} h={11} s="#e0e0e0"><path d="M5.500 0v11M0 5.500h11" /></Svg></IconButton>
        </SheetTabs>
        <HScroll>
          <IconButton aria-label="Resize tabs"><Svg w={2} h={12} s="none"><path d="M0 1h2v2H0zM0 5h2v2H0zM0 9h2v2H0z" fill="#c0c0c0" /></Svg></IconButton>
          <Svg w={10} h={10} s="none"><path d="M9 0v10L1 5z" fill="#a0a0a0" /></Svg>
          <HTrack />
          <Svg w={10} h={10} s="none"><path d="M2 0v10l8-5z" fill="#a0a0a0" /></Svg>
        </HScroll>
      </SheetBar>
      <StatusBar>
        <StatusText $gap={16}>Ready</StatusText>
        <StatusText $gap={20}>Filter Mode</StatusText>
        <Svg w={18} h={16} s="#e6e6e6">
          <circle cx="6" cy="3" r="1.700" />
          <path d="m0 5 4 1.500v3L2 14.500l2 .5 2-4M12 4.500l-4 2V9M0 5l1-1.500 4 1M7 4.500l4.500-1 .5 1M6.500 12.500l2 2 5-5" />
        </Svg>
        <StatusText>Accessibility: Good to go</StatusText>
        <ViewSwitch>
          <ViewButton $active aria-label="Normal view">
            <Svg w={14} h={14} s="#fff"><path d="M.500.500h13v12H.500zM.500 4.500h13M.500 8.500h13M5 .500v12M9.500.500v12" /></Svg>
          </ViewButton>
          <ViewButton aria-label="Page layout view">
            <Svg w={14} h={14} s="#fff"><path d="M.500.500h13v12H.500zM3.500 2.500h7v8h-7zM5 4.500h4M5 6.500h4M5 8.500h4" /></Svg>
          </ViewButton>
          <ViewButton aria-label="Page break view">
            <Svg w={14} h={14} s="#fff"><path d="M.500.500h13v12H.500zM.500 7.500h9v-7M5.500.500v7" /></Svg>
          </ViewButton>
        </ViewSwitch>
        <IconButton $w={19} $h={20} aria-label="Zoom out"><Svg w={9} h={9} s="#fff"><path d="M0 4.500h9" /></Svg></IconButton>
        <Zoom type="range" aria-label="Zoom" min={0} max={100} defaultValue={50} />
        <IconButton $w={18} $h={20} aria-label="Zoom in"><Svg w={9} h={9} s="#fff"><path d="M0 4.500h9M4.500 0v9" /></Svg></IconButton>
        <ZoomValue>100%</ZoomValue>
      </StatusBar>
      <TaskBar>
        <IconButton $w={48} $h={40} aria-label="Start">
          <Svg s="none"><path d="M0 2.300 6.600 1.400v6.200H0zM7.400 1.300 16 0v7.600H7.400zM0 8.400h6.600v6.200L0 13.700zM7.400 8.400H16V16l-8.600-1.300z" fill="#fff" /></Svg>
        </IconButton>
        <TaskSearch>
          <Svg w={24} h={24} s="#fff" sw={2}><circle cx="14.500" cy="9.500" r="7.500" /><path d="M9 15 2 22" /></Svg>
          Search
        </TaskSearch>
        <TaskItem aria-label="File Explorer">
          <Svg w={24} h={24} s="none">
            <path d="M2 3h8l2 2h10v16H2z" fill="#e8b42c" />
            <path d="M2 7h20v14H2z" fill="#ffdb5c" />
            <path d="M5 13h14v9h-4v-4H9v4H5z" fill="#2f8fe0" />
          </Svg>
        </TaskItem>
        <TaskItem aria-label="Hexagon app">
          <Svg w={24} h={24} s="none">
            <path d="M7 2h10l6 10-6 10H7L1 12z" fill="#4a9c9e" />
            <path d="M7 2h10l2 4H10L6 12l-5 0z" fill="#6cb8b6" />
            <path d="m14 8 3 4-3 4-3-4z" fill="#12384a" />
          </Svg>
        </TaskItem>
        <TaskItem $idle aria-label="FileZilla">
          <Svg w={24} h={24} s="#fff" sw={2.400}>
            <path d="M0 0h24v24H0z" fill="#b3060c" stroke="none" />
            <path d="M5 18 8 5h9M7 11h6M12.500 11.500h7L13 19h6.500" />
          </Svg>
        </TaskItem>
        <TaskItem aria-label="Outlook">
          <Svg w={24} h={24} s="none">
            <path d="M8 2h14v13H8z" fill="#28a8ea" />
            <path d="M8 2h7v6H8z" fill="#0f6cbd" />
            <path d="M15 8h7v6h-7z" fill="#1480d0" />
            <path d="M6 12l9 5 9-5v10H6z" fill="#50d0ff" />
            <path d="M6 12v10h18z" fill="#1490df" />
            <path d="M0 6h13v12H0z" fill="#0f64b8" />
            <circle cx="6.500" cy="12" r="3" stroke="#fff" strokeWidth="1.800" />
          </Svg>
        </TaskItem>
        <TaskItem $bg="#4b6076" aria-label="Zoom">
          <Svg w={24} h={24} s="none">
            <circle cx="12" cy="12" r="12" fill="#1063ea" />
            <text x="3" y="16" fontSize="12" fontWeight="700" fill="#fff">zm</text>
          </Svg>
        </TaskItem>
        <TaskItem aria-label="Chrome profile one"><Chrome badge="#4a6fe0" inner="#e0705c" /></TaskItem>
        <TaskItem aria-label="Chrome profile two"><Chrome badge="#f2e2a0" inner="#d8541e" /></TaskItem>
        <TaskItem aria-label="Chrome profile three"><Chrome badge="#dcd0ea" inner="#d83848" /></TaskItem>
        <TaskItem $bg="#10508e" aria-label="Excel"><ExcelLogo size={23} /></TaskItem>
        <TaskItem aria-label="Calculator">
          <Svg w={20} h={24} s="none">
            <path d="M0 0h20v24H0z" fill="#7c8894" />
            <path d="M2 2h16v4H2z" fill="#48d0e0" />
            <path d="M2 8h4v4H2zM8 8h4v4H8zM14 8h4v4h-4zM2 13h4v4H2zM8 13h4v4H8zM2 18h4v4H2zM8 18h4v4H8z" fill="#f4f4f4" />
            <path d="M14 13h4v9h-4z" fill="#15406c" />
          </Svg>
        </TaskItem>
        <TaskItem aria-label="Notepad">
          <Svg w={24} h={24} s="none">
            <path d="M8 1h14l-4 19-17-2z" fill="#7fb4bf" />
            <path d="M8 1h14l-2 9L4 13z" fill="#cfe4e8" />
            <path d="m1 18 17 2 4-18 1 3-4 18-18-3z" fill="#d8dcdc" />
          </Svg>
        </TaskItem>
        <Tray>
          <IconButton aria-label="Hidden icons"><Svg w={12} h={8} s="#fff" sw={1.200}><path d="M.500 6.500 6 1l5.500 5.500" /></Svg></IconButton>
          <IconButton aria-label="Network">
            <Svg w={18} h={16} s="#fff"><path d="M5 3.500h11.500v8h-12V8M1.500 2.500h4v3h-4zM3.500 6v4M10.500 12v2.500M7 14.500h7" /></Svg>
          </IconButton>
          <IconButton aria-label="Volume">
            <Svg w={18} h={16} s="#fff"><path d="M1.500 6v4H4l3.500 3.500v-11L4 6zM9.500 6q1.500 2 0 4M12 4q3 4 0 8M14.500 2q4.500 6 0 12" /></Svg>
          </IconButton>
          <Clock>11:04 PM<br />7/30/2025</Clock>
          <IconButton $w={38} aria-label="Notifications">
            <Svg s="none" w={16} h={16}>
              <path d="M0 0h16v12h-5l-3 4-3-4H0z" fill="#fff" />
              <path d="M3 4.500h10M3 7.500h7" stroke="#0a2740" />
            </Svg>
          </IconButton>
          <ShowDesktop />
        </Tray>
      </TaskBar>
    </Window>
  );
}
